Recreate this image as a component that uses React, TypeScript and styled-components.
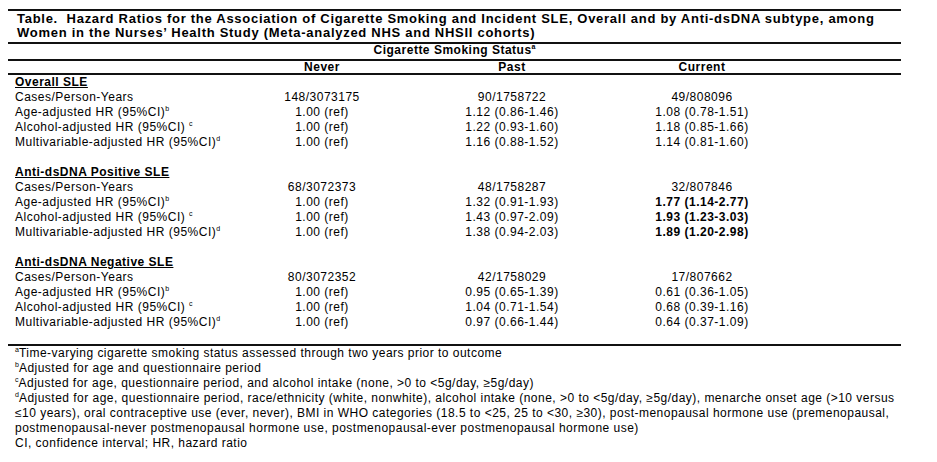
import React from 'react';
import styled, { createGlobalStyle } from 'styled-components';

const GlobalStyle = createGlobalStyle`
  body {
    margin: 0;
    background: #fff;
    color: #000;
    font-family: 'Liberation Sans', Arial, sans-serif;
  }
`;

const Page = styled.div`
  width: 893px;
  margin-left: 8px;
  padding-top: 9px;
`;

const Rule = styled.div`
  border-top: 2px solid #111;
`;

const Title = styled.div`
  font-size: 13px;
  font-weight: bold;
  line-height: 14px;
  letter-spacing: 0.72px;
  padding: 1px 0 2px 9px;
  border-bottom: 2px solid #111;
  white-space: nowrap;
`;

const SpanHeader = styled.div`
  font-size: 12px;
  font-weight: bold;
  line-height: 13px;
  letter-spacing: 0.5px;
  padding-bottom: 2px;
  text-align: center;
  border-bottom: 2px solid #111;
`;

const Row = styled.div<{ $head?: boolean }>`
  display: grid;
  grid-template-columns: 219px 190px 190px 190px 1fr;
  font-size: 12px;
  letter-spacing: 0.5px;
  line-height: ${(p) => (p.$head ? '12px' : '15px')};
  height: ${(p) => (p.$head ? '12px' : '15px')};
  font-weight: ${(p) => (p.$head ? 'bold' : 'normal')};
  border-bottom: ${(p) => (p.$head ? '2px solid #111' : 'none')};
  white-space: nowrap;
`;

const Label = styled.div`
  padding-left: 7px;
`;

const Cell = styled.div<{ $bold?: boolean }>`
  text-align: center;
  font-weight: ${(p) => (p.$bold ? 'bold' : 'inherit')};
`;

const SectionTitle = styled.span`
  font-weight: bold;
  text-decoration: underline;
  text-underline-offset: 1px;
`;

const Sup = styled.sup`
  font-size: 7px;
  line-height: 0;
  vertical-align: 5px;
  letter-spacing: 0;
`;

const Body = styled.div`
  padding-bottom: 14px;
  border-bottom: 2px solid #111;
`;

const Notes = styled.div`
  font-size: 12px;
  line-height: 15px;
  letter-spacing: 0.48px;
  padding-left: 7px;
  white-space: nowrap;
`;

type Section = {
  title: string;
  cases: [string, string, string];
  age: [string, string, string];
  alcohol: [string, string, string];
  multi: [string, string, string];
  boldCurrent?: boolean;
};

const sections: Section[] = [
  {
    title: 'Overall SLE',
    cases: ['148/3073175', '90/1758722', '49/808096'],
    age: ['1.00 (ref)', '1.12 (0.86-1.46)', '1.08 (0.78-1.51)'],
    alcohol: ['1.00 (ref)', '1.22 (0.93-1.60)', '1.18 (0.85-1.66)'],
    multi: ['1.00 (ref)', '1.16 (0.88-1.52)', '1.14 (0.81-1.60)'],
  },
  {
    title: 'Anti-dsDNA Positive SLE',
    cases: ['68/3072373', '48/1758287', '32/807846'],
    age: ['1.00 (ref)', '1.32 (0.91-1.93)', '1.77 (1.14-2.77)'],
    alcohol: ['1.00 (ref)', '1.43 (0.97-2.09)', '1.93 (1.23-3.03)'],
    multi: ['1.00 (ref)', '1.38 (0.94-2.03)', '1.89 (1.20-2.98)'],
    boldCurrent: true,
  },
  {
    title: 'Anti-dsDNA Negative SLE',
    cases: ['80/3072352', '42/1758029', '17/807662'],
    age: ['1.00 (ref)', '0.95 (0.65-1.39)', '0.61 (0.36-1.05)'],
    alcohol: ['1.00 (ref)', '1.04 (0.71-1.54)', '0.68 (0.39-1.16)'],
    multi: ['1.00 (ref)', '0.97 (0.66-1.44)', '0.64 (0.37-1.09)'],
  },
];

const DataRow: React.FC<{ label: React.ReactNode; values: string[]; boldLast?: boolean }> = ({
  label,
  values,
  boldLast,
}) => (
  <Row>
    <Label>{label}</Label>
    <Cell>{values[0]}</Cell>
    <Cell>{values[1]}</Cell>
    <Cell $bold={boldLast}>{values[2]}</Cell>
  </Row>
);

const App: React.FC = () => {
  return (
    <Page>
      <GlobalStyle />
      <Rule />
      <Title>
        Table.&nbsp; Hazard Ratios for the Association of Cigarette Smoking and Incident SLE, Overall and by
        Anti-dsDNA subtype, among
        <br />
        Women in the Nurses’ Health Study (Meta-analyzed NHS and NHSII cohorts)
      </Title>
      <SpanHeader>
        Cigarette Smoking Status<Sup>a</Sup>
      </SpanHeader>
      <Row $head>
        <Label />
        <Cell>Never</Cell>
        <Cell>Past</Cell>
        <Cell>Current</Cell>
      </Row>
      <Body>
        {sections.map((s, i) => (
          <React.Fragment key={s.title}>
            {i > 0 && <Row />}
            <Row>
              <Label>
                <SectionTitle>{s.title}</SectionTitle>
              </Label>
            </Row>
            <DataRow label="Cases/Person-Years" values={s.cases} />
            <DataRow
              label={
                <>
                  Age-adjusted HR (95%CI)<Sup>b</Sup>
                </>
              }
              values={s.age}
              boldLast={s.boldCurrent}
            />
            <DataRow
              label={
                <>
                  Alcohol-adjusted HR (95%CI) <Sup>c</Sup>
                </>
              }
              values={s.alcohol}
              boldLast={s.boldCurrent}
            />
            <DataRow
              label={
                <>
                  Multivariable-adjusted HR (95%CI)<Sup>d</Sup>
                </>
              }
              values={s.multi}
              boldLast={s.boldCurrent}
            />
          </React.Fragment>
        ))}
      </Body>
      <Notes>
        <Sup>a</Sup>Time-varying cigarette smoking status assessed through two years prior to outcome
        <br />
        <Sup>b</Sup>Adjusted for age and questionnaire period
        <br />
        <Sup>c</Sup>Adjusted for age, questionnaire period, and alcohol intake (none, &gt;0 to &lt;5g/day, ≥5g/day)
        <br />
        <Sup>d</Sup>Adjusted for age, questionnaire period, race/ethnicity (white, nonwhite), alcohol intake (none, &gt;0
        to &lt;5g/day, ≥5g/day), menarche onset age (&gt;10 versus
        <br />
        ≤10 years), oral contraceptive use (ever, never), BMI in WHO categories (18.5 to &lt;25, 25 to &lt;30, ≥30),
        post-menopausal hormone use (premenopausal,
        <br />
        postmenopausal-never postmenopausal hormone use, postmenopausal-ever postmenopausal hormone use)
        <br />
        CI, confidence interval; HR, hazard ratio
      </Notes>
    </Page>
  );
};

export default App;
